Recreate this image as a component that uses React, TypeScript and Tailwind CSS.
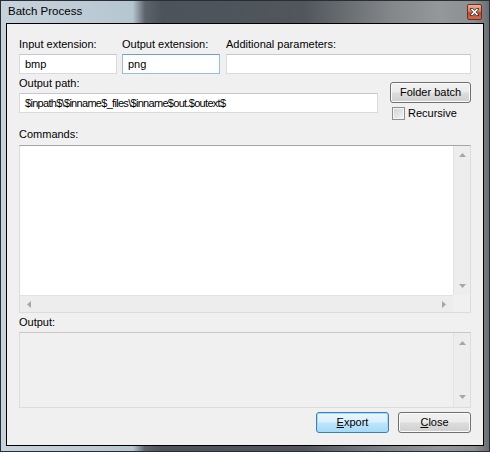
type Dir = 'up' | 'down' | 'left' | 'right';

function Tri({ dir }: { dir: Dir }) {
  const vertical = dir === 'up' || dir === 'down';
  const pts = {
    up: '0,4 3.5,0 7,4',
    down: '0,0 7,0 3.5,4',
    left: '4,0 4,7 0,3.5',
    right: '0,0 4,3.5 0,7',
  }[dir];
  const w = vertical ? 7 : 4;
  const h = vertical ? 4 : 7;
  return (
    <svg width={w} height={h} viewBox={`0 0 ${w} ${h}`}>
      <polygon points={pts} fill="#a6a6a6" />
    </svg>
  );
}

function VScroll({ pad }: { pad: string }) {
  return (
    <div className={`w-[17px] flex flex-col items-center justify-between bg-[#ededed] border-l border-[#e2e2e2] ${pad}`}>
      <Tri dir="up" />
      <Tri dir="down" />
    </div>
  );
}

function Label({ children }: { children: React.ReactNode }) {
  return <div className="text-[11px] leading-[13px] text-black">{children}</div>;
}

// textbox shape; border colours are added per box so they don't clash
const inputBase = 'h-[20px] bg-white border px-[5px] text-[11px] leading-[18px] text-black';
const grayBorder = 'border-[#d9dadc] border-t-[#c6c8cc]';
const blueBorder = 'border-[#96bfe8] border-t-[#6f9fd2]';

const buttonCls =
  'h-[21px] rounded-[3px] border border-[#707070] shadow-[inset_0_0_0_1px_#fbfbfb] bg-[linear-gradient(180deg,#f2f2f2_0%,#ebebeb_48%,#dddddd_52%,#cfcfcf_100%)] text-[11px] text-black flex items-center justify-center';

export default function App() {
  return (
    <div className="w-[490px] h-[452px] border border-[#2a2e33] flex flex-col font-['Liberation_Sans',Arial,sans-serif] bg-[linear-gradient(90deg,#c6d3dc_0%,#b6c6d1_27%,#5c636a_29.5%,#4c535a_33%,#50565c_62%,#83878a_80%,#95989a_90%,#8c8f92_97%,#6a6e72_100%)]">
      {/* Title bar */}
      <div className="h-[22px] flex items-center justify-between pl-[7px] pr-[7px]">
        <span className="text-[11.5px] text-black">Batch Process</span>
        <div className="w-[15px] h-[16px] rounded-[2px] border border-[#6a3024] bg-[linear-gradient(180deg,#eeb09c_0%,#dc7a5e_45%,#c4472a_55%,#d06a4d_100%)] flex items-center justify-center">
          <svg width="9" height="8" viewBox="0 0 9 8">
            <path d="M1.5 1 L7.5 7 M7.5 1 L1.5 7" stroke="#3b3b3b" strokeWidth="3" strokeLinecap="square" />
            <path d="M1.5 1 L7.5 7 M7.5 1 L1.5 7" stroke="#ffffff" strokeWidth="1.6" />
          </svg>
        </div>
      </div>

      {/* Client area */}
      <div className="mx-[5px] mb-[5px] flex-1 border border-black bg-[#f0f0f0] px-[12px] pt-[14px] flex flex-col">
        {/* Extensions row */}
        <div className="flex">
          <div className="w-[98px] flex flex-col gap-[3px]">
            <Label>Input extension:</Label>
            <div className={`${inputBase} ${grayBorder}`}>bmp</div>
          </div>
          <div className="ml-[5px] w-[98px] flex flex-col gap-[3px]">
            <Label>Output extension:</Label>
            <div className={`${inputBase} ${blueBorder}`}>png</div>
          </div>
          <div className="ml-[6px] flex-1 flex flex-col gap-[3px]">
            <Label>Additional parameters:</Label>
            <div className={`${inputBase} ${grayBorder}`}></div>
          </div>
        </div>

        {/* Output path row */}
        <div className="mt-[3px] flex gap-[12px]">
          <div className="w-[359px] flex flex-col gap-[3px]">
            <Label>Output path:</Label>
            <div className={`${inputBase} ${grayBorder} tracking-[-0.7px] whitespace-nowrap overflow-hidden`}>
              $inpath$\$inname$_files\$inname$out.$outext$
            </div>
          </div>
          <div className="flex-1 flex flex-col">
            <div className={`${buttonCls} mt-[5px]`}>Folder batch</div>
            <div className="mt-[4px] ml-[2px] flex items-center gap-[3px]">
              <div className="w-[13px] h-[13px] border border-[#8e8f8f] bg-[linear-gradient(135deg,#d2d2d2_0%,#f4f4f4_100%)] shadow-[inset_0_0_0_1px_#f4f4f4]"></div>
              <span className="text-[11px] leading-[13px] text-black">Recursive</span>
            </div>
          </div>
        </div>

        {/* Commands */}
        <div className="mt-[8px]">
          <Label>Commands:</Label>
        </div>
        <div className="mt-[4px] h-[168px] border border-[#dcdcdc] border-t-[#a5a5a5] bg-white flex flex-col">
          <div className="flex-1 flex">
            <div className="flex-1 bg-white"></div>
            <VScroll pad="py-[7px]" />
          </div>
          <div className="h-[17px] flex">
            <div className="flex-1 flex items-center justify-between px-[7px] bg-[#ededed] border-t border-[#e2e2e2]">
              <Tri dir="left" />
              <Tri dir="right" />
            </div>
            <div className="w-[17px] bg-[#f0f0f0]"></div>
          </div>
        </div>

        {/* Output */}
        <div className="mt-[3px]">
          <Label>Output:</Label>
        </div>
        <div className="mt-[3px] h-[76px] border border-[#dcdcdc] border-t-[#c8c8c8] bg-[#f0f0f0] flex">
          <div className="flex-1"></div>
          <VScroll pad="py-[8px]" />
        </div>

        {/* Buttons */}
        <div className="mt-[4px] flex justify-end gap-[9px]">
          <div className="w-[73px] h-[21px] rounded-[3px] border border-[#3c7fb1] shadow-[inset_0_0_0_1px_#a5dcf8] bg-[linear-gradient(180deg,#eaf6fd_0%,#d9f0fc_48%,#bee6fd_52%,#a7d9f5_100%)] text-[11px] text-black flex items-center justify-center">
            <span><span className="underline">E</span>xport</span>
          </div>
          <div className={`${buttonCls} w-[73px]`}>
            <span><span className="underline">C</span>lose</span>
          </div>
        </div>
      </div>
    </div>
  );
}
